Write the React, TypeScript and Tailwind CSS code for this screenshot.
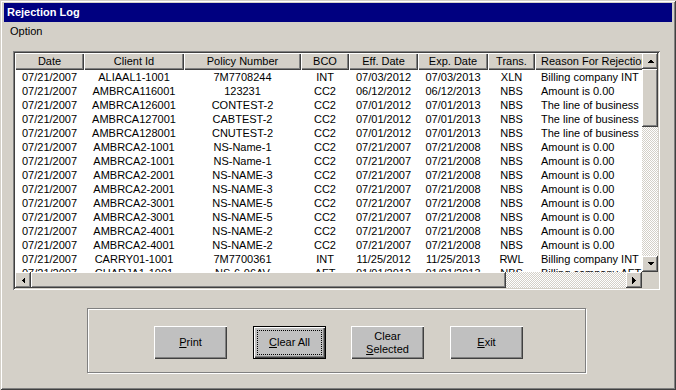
import React from "react";

type Row = [string, string, string, string, string, string, string, string];

const rows: Row[] = [
  ["07/21/2007", "ALIAAL1-1001", "7M7708244", "INT", "07/03/2012", "07/03/2013", "XLN", "Billing company INT is invalid"],
  ["07/21/2007", "AMBRCA116001", "123231", "CC2", "06/12/2012", "06/12/2013", "NBS", "Amount is 0.00"],
  ["07/21/2007", "AMBRCA126001", "CONTEST-2", "CC2", "07/01/2012", "07/01/2013", "NBS", "The line of business is invalid"],
  ["07/21/2007", "AMBRCA127001", "CABTEST-2", "CC2", "07/01/2012", "07/01/2013", "NBS", "The line of business is invalid"],
  ["07/21/2007", "AMBRCA128001", "CNUTEST-2", "CC2", "07/01/2012", "07/01/2013", "NBS", "The line of business is invalid"],
  ["07/21/2007", "AMBRCA2-1001", "NS-Name-1", "CC2", "07/21/2007", "07/21/2008", "NBS", "Amount is 0.00"],
  ["07/21/2007", "AMBRCA2-1001", "NS-Name-1", "CC2", "07/21/2007", "07/21/2008", "NBS", "Amount is 0.00"],
  ["07/21/2007", "AMBRCA2-2001", "NS-NAME-3", "CC2", "07/21/2007", "07/21/2008", "NBS", "Amount is 0.00"],
  ["07/21/2007", "AMBRCA2-2001", "NS-NAME-3", "CC2", "07/21/2007", "07/21/2008", "NBS", "Amount is 0.00"],
  ["07/21/2007", "AMBRCA2-3001", "NS-NAME-5", "CC2", "07/21/2007", "07/21/2008", "NBS", "Amount is 0.00"],
  ["07/21/2007", "AMBRCA2-3001", "NS-NAME-5", "CC2", "07/21/2007", "07/21/2008", "NBS", "Amount is 0.00"],
  ["07/21/2007", "AMBRCA2-4001", "NS-NAME-2", "CC2", "07/21/2007", "07/21/2008", "NBS", "Amount is 0.00"],
  ["07/21/2007", "AMBRCA2-4001", "NS-NAME-2", "CC2", "07/21/2007", "07/21/2008", "NBS", "Amount is 0.00"],
  ["07/21/2007", "CARRY01-1001", "7M7700361", "INT", "11/25/2012", "11/25/2013", "RWL", "Billing company INT is invalid"],
  ["07/21/2007", "CHARJA1-1001", "NS-6-06AV", "AFT", "01/01/2012", "01/01/2013", "NBS", "Billing company AFT is invalid"],
];

const headers = ["Date", "Client Id", "Policy Number", "BCO", "Eff. Date", "Exp. Date", "Trans.", "Reason For Rejection"];

const colCls = [
  "w-[69px] text-center",
  "w-[100px] text-center",
  "w-[117px] text-center",
  "w-[48px] text-center",
  "w-[69px] text-center",
  "w-[70px] text-center",
  "w-[47px] text-center",
  "w-[220px] text-left pl-[6px]",
];

const raised =
  "bg-[#d4d0c8] shadow-[inset_-1px_-1px_#404040,inset_1px_1px_#ffffff,inset_-2px_-2px_#808080,inset_2px_2px_#d4d0c8]";

function Arrow({ dir }: { dir: "up" | "down" | "left" | "right" }) {
  const pts =
    dir === "up"
      ? "0,4 7,4 3.5,0.5"
      : dir === "down"
      ? "0,0 7,0 3.5,3.5"
      : dir === "left"
      ? "4,0 4,7 0.5,3.5"
      : "0,0 0,7 3.5,3.5";
  const w = dir === "up" || dir === "down" ? 7 : 4;
  const h = dir === "up" || dir === "down" ? 4 : 7;
  return (
    <svg width={w} height={h} viewBox={`0 0 ${w} ${h}`} shapeRendering="crispEdges">
      <polygon points={pts} fill="#000" />
    </svg>
  );
}

function ScrollBtn({ dir }: { dir: "up" | "down" | "left" | "right" }) {
  return (
    <div className={`w-[16px] h-[16px] shrink-0 flex items-center justify-center ${raised}`}>
      <Arrow dir={dir} />
    </div>
  );
}

const track =
  "bg-[image:repeating-conic-gradient(#d4d0c8_0_25%,#ffffff_0_50%)] bg-[length:2px_2px]";

function Btn({ children, def }: { children: React.ReactNode; def?: boolean }) {
  if (def) {
    return (
      <div className="w-[73px] h-[33px] border border-black bg-[#c0c0c0] shadow-[inset_1px_1px_#ffffff,inset_-1px_-1px_#404040,inset_-2px_-2px_#808080] p-[3px]">
        <div className="w-full h-full border border-dotted border-black flex items-center justify-center leading-[13px] text-center">
          {children}
        </div>
      </div>
    );
  }
  return (
    <div className="w-[73px] h-[33px] bg-[#c0c0c0] shadow-[inset_1px_1px_#ffffff,inset_-1px_-1px_#404040,inset_-2px_-2px_#808080] flex items-center justify-center leading-[13px] text-center">
      {children}
    </div>
  );
}

export default function App() {
  return (
    <div className="w-[676px] h-[390px] bg-[#d4d0c8] pt-[3px] px-[4px] flex flex-col font-['Liberation_Sans',Arial,sans-serif] text-[11px] text-black shadow-[inset_1px_1px_#d4d0c8,inset_-1px_-1px_#404040,inset_2px_2px_#ffffff,inset_-2px_-2px_#808080] overflow-hidden">
      {/* Title bar */}
      <div className="h-[19px] bg-[#000080] flex items-center pl-[3px] text-white font-bold">
        Rejection Log
      </div>
      {/* Menu bar */}
      <div className="h-[19px] flex items-center pl-[6px]">Option</div>

      {/* List view */}
      <div className="ml-[9px] mt-[10px] w-[647px] h-[239px] p-[2px] bg-[#d4d0c8] shadow-[inset_1px_1px_#808080,inset_-1px_-1px_#ffffff,inset_2px_2px_#404040,inset_-2px_-2px_#d4d0c8] flex flex-col">
        <div className="flex h-[219px]">
          <div className="w-[627px] h-[219px] bg-white overflow-hidden">
            <div className="flex h-[17px] w-max">
              {headers.map((h, i) => (
                <div
                  key={i}
                  className={`${colCls[i]} h-[17px] leading-[17px] whitespace-nowrap overflow-hidden bg-[#d4d0c8] shadow-[inset_1px_1px_#ffffff,inset_-1px_-1px_#404040,inset_-2px_-2px_#808080]`}
                >
                  {h}
                </div>
              ))}
            </div>
            {rows.map((r, ri) => (
              <div key={ri} className="flex h-[14px] w-max leading-[14px]">
                {r.map((c, ci) => (
                  <div key={ci} className={`${colCls[ci]} whitespace-nowrap overflow-hidden`}>
                    {c}
                  </div>
                ))}
              </div>
            ))}
          </div>
          {/* vertical scrollbar */}
          <div className="w-[16px] h-[219px] flex flex-col">
            <ScrollBtn dir="up" />
            <div className={`w-[16px] h-[58px] ${raised}`} />
            <div className={`flex-1 ${track}`} />
            <ScrollBtn dir="down" />
          </div>
        </div>
        <div className="flex h-[16px]">
          <div className="w-[627px] h-[16px] flex">
            <ScrollBtn dir="left" />
            <div className={`w-[475px] h-[16px] ${raised}`} />
            <div className={`flex-1 ${track}`} />
            <ScrollBtn dir="right" />
          </div>
          <div className="w-[16px] h-[16px] bg-[#d4d0c8]" />
        </div>
      </div>

      {/* Button group */}
      <div className="ml-[83px] mt-[18px] w-[499px] h-[65px] border border-[#808080] shadow-[inset_1px_1px_#ffffff,1px_1px_#ffffff] pt-[17px] flex items-start">
        <div className="ml-[66px]">
          <Btn>
            <span>
              <u>P</u>rint
            </span>
          </Btn>
        </div>
        <div className="ml-[26px]">
          <Btn def>
            <span>
              <u>C</u>lear All
            </span>
          </Btn>
        </div>
        <div className="ml-[25px]">
          <Btn>
            <span>
              Clear
              <br />
              <u>S</u>elected
            </span>
          </Btn>
        </div>
        <div className="ml-[26px]">
          <Btn>
            <span>
              <u>E</u>xit
            </span>
          </Btn>
        </div>
      </div>
    </div>
  );
}
